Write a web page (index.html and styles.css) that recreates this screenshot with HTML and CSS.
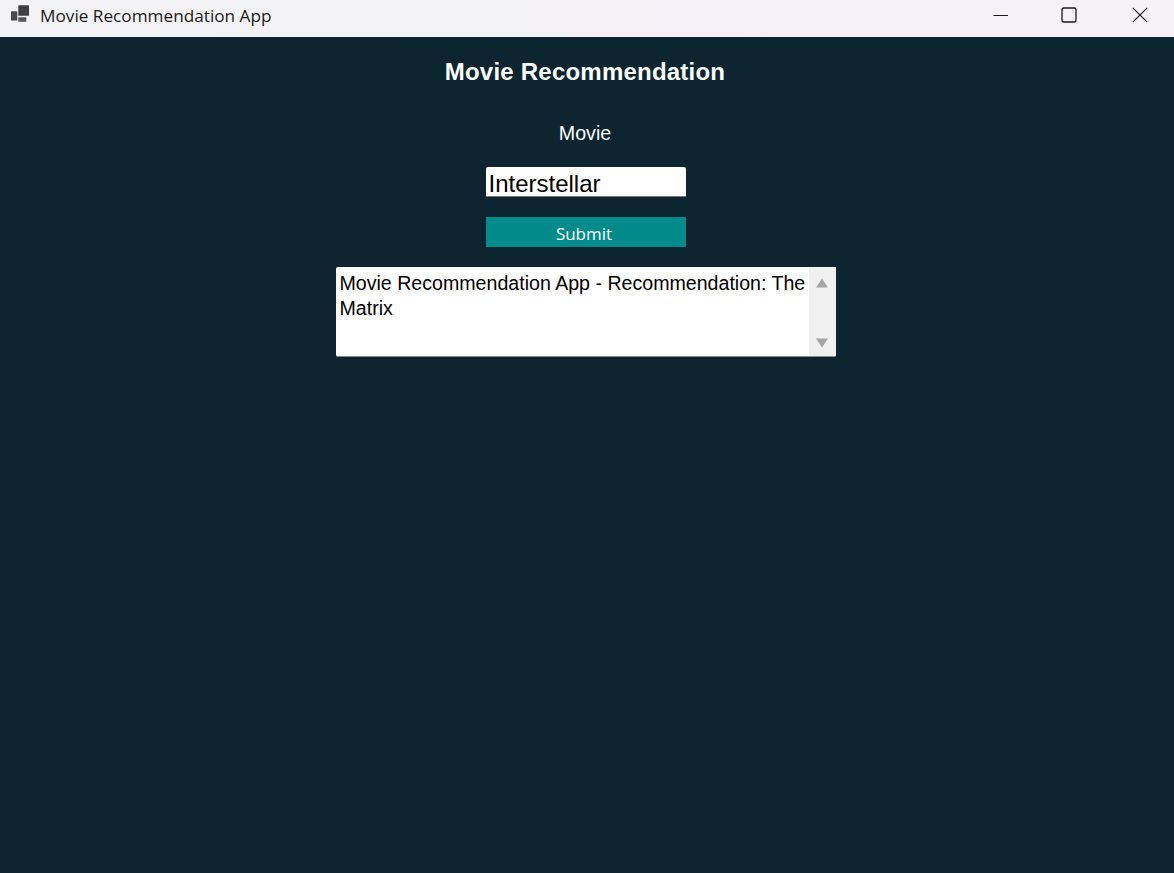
FILE: index.html
```html
<!DOCTYPE html>
<html lang="en">
<head>
<meta charset="utf-8">
<title>Movie Recommendation App</title>
<link rel="stylesheet" href="styles.css">
</head>
<body>
<header class="titlebar">
  <div class="app-id">
    <svg class="app-icon" width="20" height="18" viewBox="0 0 20 18">
      <rect x="1" y="6.2" width="6.3" height="9.3" rx="0.6" fill="#4a4a4c"/>
      <rect x="8.3" y="0.2" width="10.7" height="10.6" rx="0.6" fill="#3f3f41"/>
      <rect x="8.3" y="12.2" width="8" height="4.6" rx="0.6" fill="#565658"/>
    </svg>
    <span class="app-name">Movie Recommendation App</span>
  </div>
  <div class="win-controls">
    <button class="win-btn win-btn-min" aria-label="Minimize">
      <svg width="16" height="16" viewBox="0 0 16 16"><path d="M0.5 8.5H15" stroke="#1c1c1c" fill="none"/></svg>
    </button>
    <button class="win-btn" aria-label="Maximize">
      <svg width="16" height="16" viewBox="0 0 16 16"><rect x="1" y="1" width="14" height="14" rx="1.5" stroke="#1c1c1c" stroke-width="1.3" fill="none"/></svg>
    </button>
    <button class="win-btn" aria-label="Close">
      <svg width="16" height="16" viewBox="0 0 16 16"><path d="M0.8 0.8L15.2 15.2M15.2 0.8L0.8 15.2" stroke="#1c1c1c" stroke-width="1.2" fill="none"/></svg>
    </button>
  </div>
</header>
<main class="content">
  <h1 class="heading">Movie Recommendation</h1>
  <label class="field-label" for="movie">Movie</label>
  <input class="movie-input" id="movie" type="text" value="Interstellar">
  <button class="submit">Submit</button>
  <section class="result">
    <p class="result-text">Movie Recommendation App - Recommendation: The Matrix</p>
    <div class="scrollbar">
      <svg width="14" height="10" viewBox="0 0 14 10"><path d="M7 0.5L13 9.5H1Z" fill="#a6a6a6"/></svg>
      <svg width="14" height="10" viewBox="0 0 14 10"><path d="M1 0.5H13L7 9.5Z" fill="#a6a6a6"/></svg>
    </div>
  </section>
</main>
</body>
</html>
```

FILE: styles.css
```css
* { box-sizing: border-box; }
html, body { margin: 0; height: 100%; }
body {
  display: flex;
  flex-direction: column;
  height: 873px;
  overflow: hidden;
  background: #0c2530;
  font-family: "Liberation Sans", Arial, sans-serif;
}
.titlebar {
  flex: 0 0 37px;
  display: flex;
  justify-content: space-between;
  background: linear-gradient(90deg, #f3f3f5, #f5f2f6);
}
.app-id {
  display: flex;
  align-items: center;
  padding-left: 10px;
  gap: 10px;
}
.app-name {
  font-family: "Open Sans", sans-serif;
  font-size: 17.2px;
  color: #1a1a1a;
  padding-bottom: 6px;
}
.app-icon { margin-bottom: 10px; }
.win-controls { display: flex; }
.win-btn {
  width: 71px;
  height: 29px;
  padding: 0 0 0 3px;
  border: 0;
  background: none;
  display: flex;
  align-items: center;
  justify-content: center;
}
.win-btn-min { width: 66px; }
.content {
  flex: 1;
  display: flex;
  flex-direction: column;
  align-items: center;
  padding-right: 5px;
}
.heading {
  margin: 20px 0 0 1px;
  height: 30px;
  line-height: 30px;
  font-size: 24px;
  font-weight: 700;
  letter-spacing: 0.22px;
  color: #fff;
}
.field-label {
  margin: 33px 0 0 1px;
  height: 26px;
  line-height: 26px;
  font-size: 19.7px;
  color: #fff;
}
.movie-input {
  margin: 21px 0 0 2px;
  width: 200px;
  height: 30px;
  padding: 4px 3px 0;
  border: 0;
  border-bottom: 1px solid #777;
  border-radius: 2px 2px 0 0;
  background: #fff;
  color: #000;
  font-family: "Liberation Sans", Arial, sans-serif;
  font-size: 24px;
}
.submit {
  margin: 20px 0 0 2px;
  width: 200px;
  height: 30px;
  padding: 2px 3px 0 0;
  border: 0;
  background: #008b8b;
  color: #fff;
  font-family: "Open Sans", sans-serif;
  font-size: 17px;
}
.result {
  margin: 20px 0 0 2px;
  width: 500px;
  height: 90px;
  display: flex;
  background: #fff;
  border-bottom: 1px solid #888;
  border-radius: 2px;
}
.result-text {
  flex: 1;
  margin: 0;
  padding: 4px 0 0 4px;
  font-size: 19.6px;
  line-height: 25px;
  color: #000;
}
.scrollbar {
  flex: 0 0 27px;
  display: flex;
  flex-direction: column;
  justify-content: space-between;
  align-items: center;
  padding: 11px 0 8px 0;
  background: #f0f0f0;
}
```
